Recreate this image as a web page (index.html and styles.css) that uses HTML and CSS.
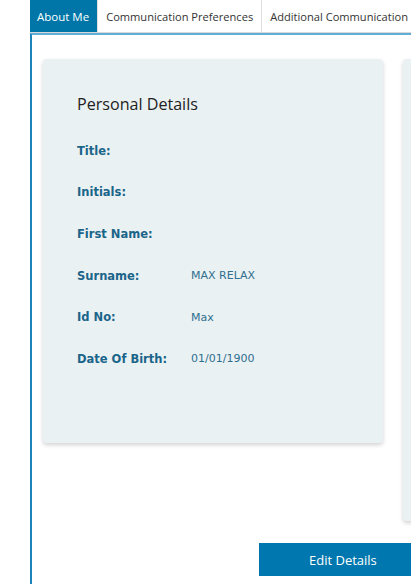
FILE: index.html
```
<!DOCTYPE html>
<html>
<head>
<meta charset="utf-8">
<link rel="stylesheet" href="styles.css">
</head>
<body>
<div class="page">
  <div class="tabs">
    <div class="tab active">About Me</div>
    <div class="tab">Communication Preferences</div>
    <div class="tab">Additional Communication</div>
  </div>
  <div class="panel">
    <div class="cards">
      <div class="card">
        <h2 class="card-title">Personal Details</h2>
        <div class="row"><span class="label">Title:</span><span class="value"></span></div>
        <div class="row"><span class="label">Initials:</span><span class="value"></span></div>
        <div class="row"><span class="label">First Name:</span><span class="value"></span></div>
        <div class="row"><span class="label">Surname:</span><span class="value">MAX RELAX</span></div>
        <div class="row"><span class="label">Id No:</span><span class="value">Max</span></div>
        <div class="row"><span class="label">Date Of Birth:</span><span class="value">01/01/1900</span></div>
      </div>
      <div class="card card-second"></div>
    </div>
    <div class="actions">
      <button class="btn">Edit Details</button>
    </div>
  </div>
</div>
</body>
</html>
```
FILE: styles.css
```
html, body {
  margin: 0;
  padding: 0;
  background: #ffffff;
  overflow: hidden;
}
body {
  width: 411px;
  height: 584px;
  font-family: "Open Sans", "Noto Sans", sans-serif;
}
.page {
  margin-left: 30px;
  width: 381px;
  height: 584px;
  overflow: hidden;
}
.tabs {
  display: flex;
  height: 32px;
  border-bottom: 1px solid #d8d8d8;
}
.tab {
  flex: none;
  display: flex;
  align-items: center;
  padding: 0 8px 0 8px;
  font-size: 11.1px;
  color: #333333;
  border-right: 1px solid #e0e0e0;
  white-space: nowrap;
}
.tab.active {
  background: #0076a8;
  color: #ffffff;
  padding: 0 8px 0 7px;
  font-size: 11.5px;
}
.panel {
  border-top: 2px solid #62aedb;
  border-left: 2px solid #1b84bb;
  padding: 24px 0 0 11px;
  height: 600px;
}
.cards {
  display: flex;
  gap: 20px;
  align-items: flex-start;
}
.card {
  flex: none;
  width: 306px;
  height: 384px;
  padding: 0 0 0 34px;
  background: #eaf1f3;
  border-radius: 4px;
  box-shadow: 0 2px 4px rgba(0, 0, 0, 0.18);
}
.card-second {
  width: 300px;
  height: 462px;
  padding: 0;
}
.card-title {
  margin: 34px 0 15px 0;
  font-size: 16.1px;
  font-weight: 400;
  color: #222222;
  line-height: 22px;
}
.row {
  display: flex;
  align-items: center;
  height: 41.6px;
}
.label {
  width: 114px;
  font-family: "DejaVu Sans", Verdana, sans-serif;
  font-weight: 700;
  font-size: 11.5px;
  color: #1a6589;
}
.value {
  font-family: "DejaVu Sans", Verdana, sans-serif;
  font-size: 11px;
  color: #2e6f8f;
}
.actions {
  margin-top: 22px;
  padding-left: 216px;
}
.btn {
  display: block;
  width: 180px;
  height: 33px;
  border: none;
  background: #0077ae;
  color: #ffffff;
  font-family: "Open Sans", "Noto Sans", sans-serif;
  font-size: 13px;
  text-align: left;
  padding: 0 0 0 50px;
  cursor: pointer;
}
```
